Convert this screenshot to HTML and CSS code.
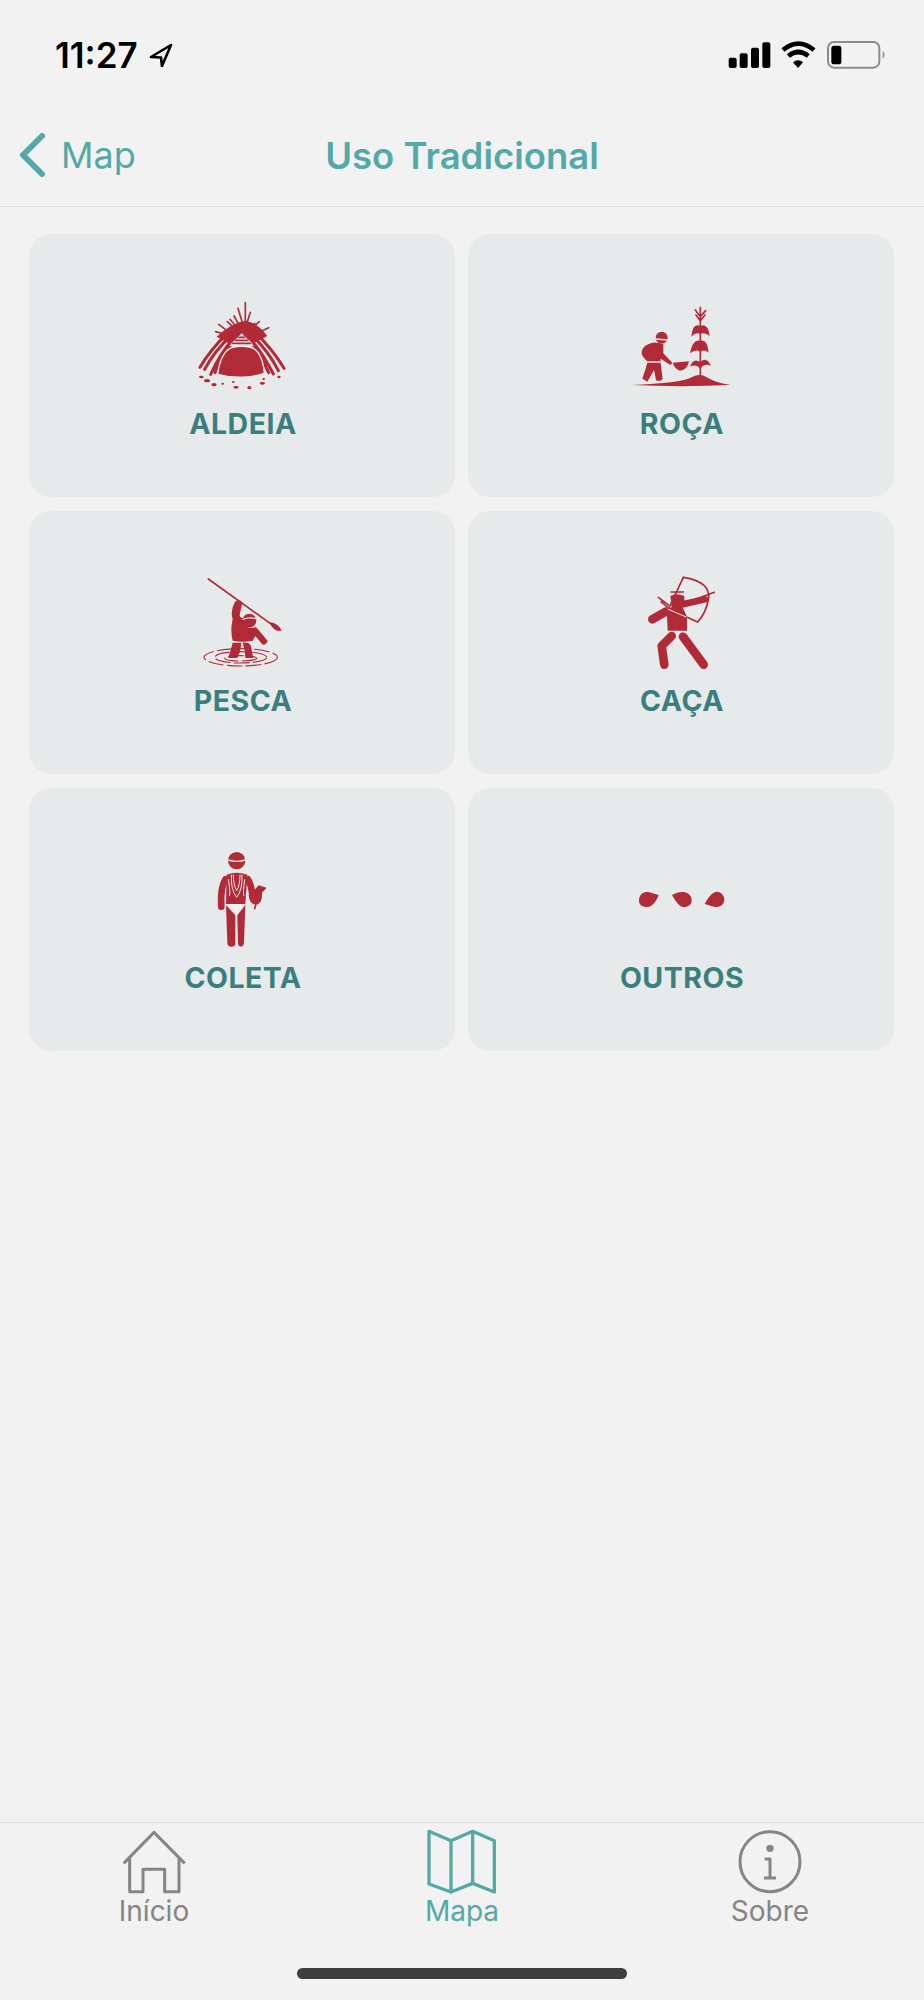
FILE: index.html
```html
<!DOCTYPE html>
<html lang="pt">
<head>
    <meta charset="UTF-8">
    <meta name="viewport" content="width=device-width, initial-scale=1.0">
    <title>Uso Tradicional</title>
    <link rel="stylesheet" href="styles.css">
</head>
<body>
<div class="app">
    <div class="status-bar">
        <div class="status-left">
            <span class="time">11:27</span>
            <svg class="loc-arrow" viewBox="0 0 24 24"><path d="M22 2 L2 14 L12 14.5 L13 23 Z"/></svg>
        </div>
        <svg class="status-icons" viewBox="80 60 480 90">
            <rect x="85" y="113" width="24" height="31" rx="6"/>
            <rect x="118" y="100" width="24" height="44" rx="6"/>
            <rect x="152" y="83" width="24" height="61" rx="6"/>
            <rect x="186" y="67" width="24" height="77" rx="6"/>
            <path class="wifi" d="M248 90 Q294 52 341 90"/>
            <path class="wifi" d="M264 108 Q294 84 324 108"/>
            <path d="M278 127 Q293 115 308 127 L293 144 Z"/>
            <rect class="batt" x="383" y="66" width="154" height="77" rx="18"/>
            <rect x="393" y="77" width="30" height="56" rx="8"/>
            <path class="batt-nub" d="M547 92 Q558 104 547 117 Z"/>
        </svg>
    </div>

    <div class="nav-bar">
        <div class="back">
            <svg class="back-icon" viewBox="0 0 28 46"><path d="M24 4 L5 23 L24 42"/></svg>
            <span>Map</span>
        </div>
        <div class="nav-title">Uso Tradicional</div>
    </div>

    <div class="grid">
        <div class="card">
            <svg class="pic" viewBox="51 51 330 300">
                <g class="thin">
                    <path d="M226 68V130M204 85L218 132M241 97L230 132M192 108L208 136M180 118L200 142M172 125L195 147M146 133L182 160M137 155L172 165M296 143L250 165M268 125L240 150M254 130L235 145"/>
                </g>
                <path class="ink" d="M140 170Q185 128 226 122Q262 128 292 168L250 190L215 165L180 192Z"/>
                <g class="thick">
                    <path d="M172 160Q120 210 90 262M180 170Q132 215 104 268M188 178Q148 225 122 283M182 195Q152 235 135 278"/>
                    <path d="M258 160Q310 210 342 265M250 170Q296 215 325 272M242 178Q282 225 310 282M250 195Q278 235 296 278"/>
                </g>
                <path class="hollow" d="M215 160L178 198H252Z"/>
                <path class="thin" d="M207 172H223M197 181H233M188 190H242"/>
                <path class="ink outlined" d="M143 283C148 240 165 205 190 202Q215 196 240 202C265 205 280 240 283 280C240 295 185 295 143 283Z"/>
                <g class="ink">
                    <ellipse cx="94" cy="291" rx="7" ry="4"/>
                    <ellipse cx="111" cy="302" rx="9" ry="5"/>
                    <ellipse cx="132" cy="314" rx="8" ry="5"/>
                    <ellipse cx="158" cy="311" rx="4" ry="3"/>
                    <ellipse cx="190" cy="306" rx="4" ry="3"/>
                    <ellipse cx="198" cy="322" rx="8" ry="4"/>
                    <ellipse cx="238" cy="323" rx="6" ry="5"/>
                    <ellipse cx="277" cy="310" rx="8" ry="4"/>
                    <ellipse cx="281" cy="297" rx="4" ry="3"/>
                    <ellipse cx="327" cy="291" rx="5" ry="4"/>
                </g>
            </svg>
            <div class="card-label">ALDEIA</div>
        </div>

        <div class="card">
            <svg class="pic" viewBox="48 21 330 300">
                <circle class="ink" cx="155" cy="143" r="18"/>
                <path class="gap" d="M136 147L174 150"/>
                <path class="ink" d="M115 163Q132 152 160 163L160 190L187 218L181 225L152 206V214H112Q92 196 95 185Q98 170 115 163Z"/>
                <path class="ink" d="M112 218H152L158 268Q150 276 138 271L132 240L112 275L97 266Q106 240 112 218Z"/>
                <path class="ink" d="M188 218L237 214Q232 241 210 242Q195 238 188 218Z"/>
                <path class="ink" d="M65 285Q210 280 245 262Q270 248 290 262Q320 280 362 285Q210 292 65 285Z"/>
                <g class="thin">
                    <path d="M271 52V258M271 80L256 60M271 80L287 62M271 92L258 75M271 92L285 75"/>
                </g>
                <path class="ink" d="M271 108Q248 96 244 140Q258 125 271 132Z"/>
                <path class="ink" d="M271 108Q294 98 299 138Q284 125 271 132Z"/>
                <path class="ink" d="M271 152Q248 146 240 190Q258 176 271 186Z"/>
                <path class="ink" d="M271 152Q292 146 296 188Q282 176 271 186Z"/>
                <path class="ink" d="M271 216Q250 202 240 230Q258 220 271 236Z"/>
                <path class="ink" d="M271 216Q290 198 303 228Q284 218 271 236Z"/>
            </svg>
            <div class="card-label">ROÇA</div>
        </div>

        <div class="card">
            <svg class="pic" viewBox="21 42 330 300">
                <path class="thin" d="M85 57L280 197"/>
                <path class="ink" d="M268 186Q298 190 304 213Q280 216 268 186Z"/>
                <path class="ink" d="M165 125Q180 115 187 128L180 160Q176 172 190 175Q190 198 208 204L228 202Q240 215 263 243Q258 256 248 254L226 228L218 242Q190 248 158 242Q150 210 158 178Q150 150 165 125Z"/>
                <circle class="ink" cx="208" cy="182" r="21"/>
                <path class="gap" d="M188 178Q208 170 228 176"/>
                <path class="ink" d="M158 248H184Q182 275 172 294H145Q152 270 158 248Z"/>
                <path class="ink" d="M188 248Q205 246 212 255L220 294H196Q196 270 188 248Z"/>
                <ellipse class="ripple" cx="182" cy="292" rx="110" ry="26"/>
                <ellipse class="ripple" cx="182" cy="292" rx="78" ry="17"/>
                <ellipse class="ripple" cx="182" cy="295" rx="48" ry="8"/>
            </svg>
            <div class="card-label">PESCA</div>
        </div>

        <div class="card">
            <svg class="pic" viewBox="3 42 330 300">
                <path class="thin" d="M175 52Q260 65 250 120Q242 160 218 186"/>
                <path class="thin" d="M175 52L130 148"/>
                <path class="thin" d="M125 150L268 97"/>
                <path class="ink" d="M136 108Q155 98 178 108V132L160 138H140Z"/>
                <path class="thin" d="M100 112L130 135M108 125L128 142M138 96H175"/>
                <path class="limb" d="M150 138L240 118"/>
                <path class="limb-fat" d="M122 155L82 178"/>
                <path class="ink" d="M125 148L170 135L186 170V212H128Z"/>
                <path class="gap-thin" d="M128 147L218 186"/>
                <path class="thin" d="M186 172L218 186"/>
                <path class="limb-fat" d="M140 228L110 258L118 314"/>
                <path class="limb-fat" d="M174 230L236 314"/>
            </svg>
            <div class="card-label">CAÇA</div>
        </div>

        <div class="card">
            <svg class="pic" viewBox="-9 33 330 300">
                <circle class="ink" cx="140" cy="62" r="26"/>
                <path class="gap" d="M115 60Q140 68 166 60"/>
                <path class="ink" d="M110 104Q140 92 172 104L166 192H108Z"/>
                <path class="limb" d="M106 118Q90 145 94 200"/>
                <path class="limb" d="M174 118Q184 135 187 165"/>
                <path class="ink" d="M108 195L136 226V312Q134 320 124 320Q112 320 112 308ZM166 195L142 226L144 310Q146 320 152 320Q162 320 162 306Z"/>
                <path class="cloth" d="M112 192H163L138 226Z"/>
                <path class="gap-thin" d="M124 104Q122 150 140 172Q158 150 156 104M130 104Q130 135 140 152Q150 135 150 104M115 118Q122 160 118 168M164 118Q158 160 162 168"/>
                <path class="ink" d="M176 165Q192 152 206 136L230 143L216 158Q218 194 196 194Q178 192 176 165Z"/>
                <path class="thin" d="M198 192L194 206"/>
            </svg>
            <div class="card-label">COLETA</div>
        </div>

        <div class="card">
            <svg class="pic" viewBox="18 -57 330 300">
                <path class="ink" d="M57 90C58 72 70 65 85 66L116 75C108 95 98 110 82 111C66 111 56 104 57 90Z"/>
                <path class="ink" d="M156 75C172 66 192 62 205 71C216 80 218 96 210 104C200 113 186 114 178 106C168 96 162 86 156 75Z"/>
                <path class="ink" d="M254 102C264 84 274 68 290 65C304 65 314 78 313 90C312 104 300 112 285 111Z"/>
            </svg>
            <div class="card-label">OUTROS</div>
        </div>
    </div>

    <div class="tab-bar">
        <div class="tabs">
            <div class="tab">
                <svg class="tab-icon" viewBox="122 60 192 192"><path d="M127 160L218 67L310 160M145 140V245H185V178H250V245H293V140"/></svg>
                <span>Início</span>
            </div>
            <div class="tab active">
                <svg class="tab-icon" viewBox="1047 60 192 192"><path d="M1044 64L1110 92L1175 64L1240 92V246L1175 220L1110 246L1044 222ZM1110 92V246M1175 64V220"/></svg>
                <span>Mapa</span>
            </div>
            <div class="tab">
                <svg class="tab-icon" viewBox="770 60 192 192">
                    <circle cx="866" cy="155" r="90"/>
                    <path d="M850 147H866V203M848 204H884"/>
                    <circle class="dot" cx="866" cy="115" r="11"/>
                </svg>
                <span>Sobre</span>
            </div>
        </div>
        <div class="home-bar"></div>
    </div>
</div>
</body>
</html>
```

FILE: styles.css
```css
* {
    box-sizing: border-box;
}
body {
    margin: 0;
    background-color: #f2f2f2;
    font-family: Inter, "Liberation Sans", sans-serif;
}
.app {
    display: flex;
    flex-direction: column;
    width: 924px;
    height: 2000px;
}
.status-bar {
    display: flex;
    justify-content: space-between;
    align-items: center;
    height: 110px;
    padding: 0 37px 0 55px;
}
.status-left {
    display: flex;
    align-items: center;
    gap: 11px;
}
.time {
    font-size: 35px;
    font-weight: 600;
    color: #000;
}
.loc-arrow {
    width: 24px;
    height: 24px;
    fill: none;
    stroke: #000;
    stroke-width: 2.6;
    stroke-linejoin: round;
}
.status-icons {
    width: 160px;
    height: 30px;
}
.wifi {
    fill: none;
    stroke: #000;
    stroke-width: 14;
}
.batt {
    fill: none;
    stroke: #8c8c8c;
    stroke-width: 6;
}
.batt-nub {
    fill: #8c8c8c;
}
.nav-bar {
    position: relative;
    display: flex;
    justify-content: center;
    align-items: center;
    height: 97px;
    padding-bottom: 4px;
    border-bottom: 1px solid #dfdfdf;
}
.back {
    position: absolute;
    left: 18px;
    top: 22px;
    display: flex;
    align-items: center;
    gap: 15px;
    font-size: 36px;
    color: #54a9a7;
}
.back-icon {
    width: 28px;
    height: 46px;
    fill: none;
    stroke: #54a9a7;
    stroke-width: 6;
    stroke-linecap: round;
    stroke-linejoin: round;
}
.nav-title {
    font-size: 36.5px;
    font-weight: 600;
    color: #54a9a7;
}
.grid {
    display: grid;
    grid-template-columns: 426px 426px;
    grid-auto-rows: 263px;
    gap: 14px 13px;
    padding: 27px 30px 0 29px;
}
.card {
    display: flex;
    flex-direction: column;
    align-items: center;
    padding-top: 63px;
    background: #e7eaeb;
    border-radius: 22px;
}
.pic {
    display: block;
    width: 110px;
    height: 100px;
}
.ink {
    fill: #b12a38;
}
.outlined {
    stroke: #e7eaeb;
    stroke-width: 4;
}
.hollow {
    fill: #e7eaeb;
}
.thin {
    fill: none;
    stroke: #b12a38;
    stroke-width: 5;
    stroke-linecap: round;
}
.thick {
    fill: none;
    stroke: #b12a38;
    stroke-width: 9;
    stroke-linecap: round;
}
.gap {
    fill: none;
    stroke: #e7eaeb;
    stroke-width: 4;
}
.gap-thin {
    fill: none;
    stroke: #e7eaeb;
    stroke-width: 3;
}
.cloth {
    fill: #f2f2f2;
}
.ripple {
    fill: none;
    stroke: #b12a38;
    stroke-width: 3.5;
    stroke-dasharray: 46 10;
}
.limb {
    fill: none;
    stroke: #b12a38;
    stroke-width: 20;
    stroke-linecap: round;
    stroke-linejoin: round;
}
.limb-fat {
    fill: none;
    stroke: #b12a38;
    stroke-width: 26;
    stroke-linecap: round;
    stroke-linejoin: round;
}
.card-label {
    margin-top: 10px;
    padding-left: 2px;
    font-size: 28.5px;
    line-height: 34px;
    font-weight: 700;
    letter-spacing: 0.5px;
    color: #3a7f7d;
}
.tab-bar {
    margin-top: auto;
    height: 178px;
    border-top: 1px solid #dcdcdc;
}
.tabs {
    display: grid;
    grid-template-columns: repeat(3, 308px);
    padding-top: 7px;
}
.tab {
    display: flex;
    flex-direction: column;
    align-items: center;
    font-size: 28px;
    line-height: 34px;
    color: #858585;
}
.tab-icon {
    display: block;
    width: 64px;
    height: 64px;
    overflow: visible;
    fill: none;
    stroke: #858585;
    stroke-width: 9;
    stroke-linejoin: round;
}
.tab-icon .dot {
    fill: #858585;
    stroke: none;
}
.tab.active {
    color: #54a9a7;
}
.tab.active .tab-icon {
    stroke: #54a9a7;
    stroke-width: 10;
}
.home-bar {
    width: 330px;
    height: 11px;
    margin: 40px auto 0;
    background: #3e3e3e;
    border-radius: 6px;
}
```
